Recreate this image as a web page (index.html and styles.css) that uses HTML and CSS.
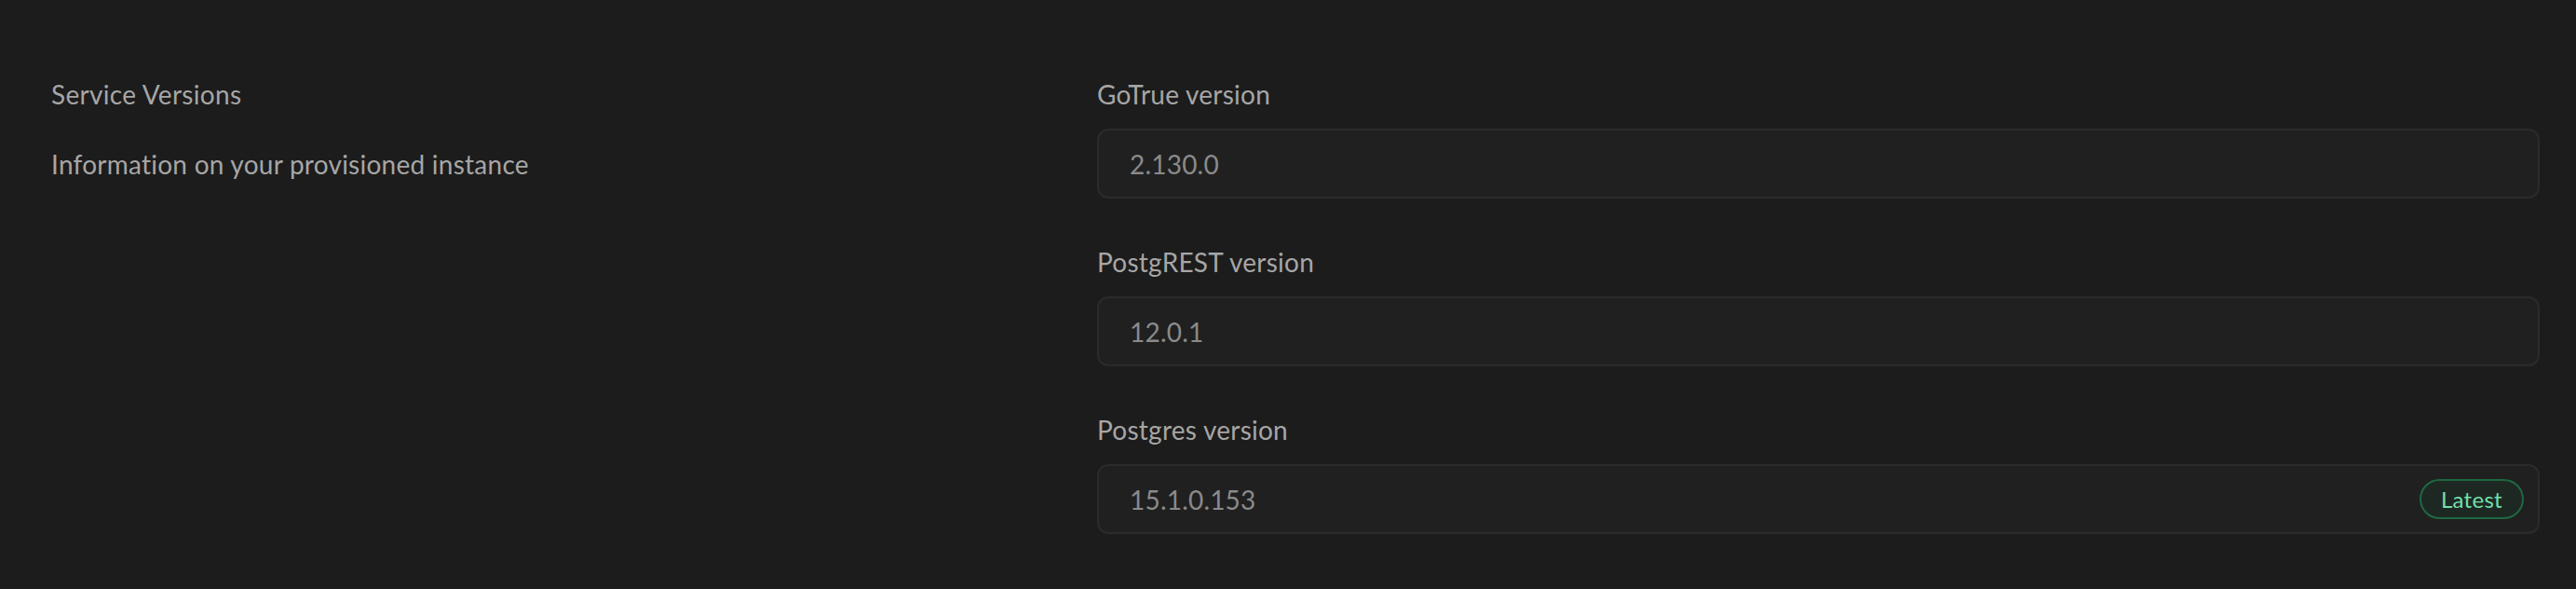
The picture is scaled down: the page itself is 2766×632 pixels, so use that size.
FILE: index.html
```html
<!DOCTYPE html>
<html lang="en">
<head>
<meta charset="utf-8">
<title>Service Versions</title>
<link rel="stylesheet" href="styles.css">
</head>
<body>
<section class="panel">
  <div class="intro">
    <h3 class="intro-title">Service Versions</h3>
    <p class="intro-desc">Information on your provisioned instance</p>
  </div>
  <div class="fields">
    <div class="field">
      <label class="field-label">GoTrue version</label>
      <div class="field-input"><span class="field-value">2.130.0</span></div>
    </div>
    <div class="field">
      <label class="field-label">PostgREST version</label>
      <div class="field-input"><span class="field-value">12.0.1</span></div>
    </div>
    <div class="field">
      <label class="field-label">Postgres version</label>
      <div class="field-input"><span class="field-value">15.1.0.153</span><span class="badge">Latest</span></div>
    </div>
  </div>
</section>
</body>
</html>
```

FILE: styles.css
```css
* { box-sizing: border-box; }
html, body {
  margin: 0;
  padding: 0;
  background: #1c1c1c;
  width: 2766px;
  height: 632px;
  overflow: hidden;
  font-family: "Lato", "Liberation Sans", sans-serif;
}
.panel {
  display: grid;
  grid-template-columns: 1075px 1549px;
  column-gap: 48px;
  padding: 81px 39px 0 55px;
}
.intro-title {
  margin: 0;
  font-size: 28px;
  line-height: 40px;
  font-weight: 400;
  letter-spacing: 0.3px;
  color: #a6a6a6;
}
.intro-desc {
  margin: 35px 0 0 0;
  font-size: 28px;
  line-height: 40px;
  letter-spacing: 0.25px;
  color: #a6a6a6;
}
.fields {
  display: flex;
  flex-direction: column;
  gap: 48px;
}
.field {
  display: flex;
  flex-direction: column;
  gap: 17px;
}
.field-label {
  display: block;
  height: 40px;
  font-size: 28px;
  line-height: 40px;
  letter-spacing: 0.25px;
  color: #a6a6a6;
}
.field-input {
  height: 75px;
  display: flex;
  align-items: center;
  justify-content: space-between;
  padding: 0 15px 0 33px;
  background: #202020;
  border: 2px solid #2b2b2b;
  border-radius: 12px;
}
.field-value {
  font-size: 28px;
  line-height: 40px;
  letter-spacing: 0.2px;
  color: #8a8a8a;
}
.badge {
  height: 43px;
  padding: 0 21px;
  display: inline-flex;
  align-items: center;
  border-radius: 999px;
  border: 2px solid #1d6843;
  background: #1e2823;
  color: #72dfab;
  font-size: 24px;
  line-height: 32px;
  letter-spacing: 0.3px;
}
```
